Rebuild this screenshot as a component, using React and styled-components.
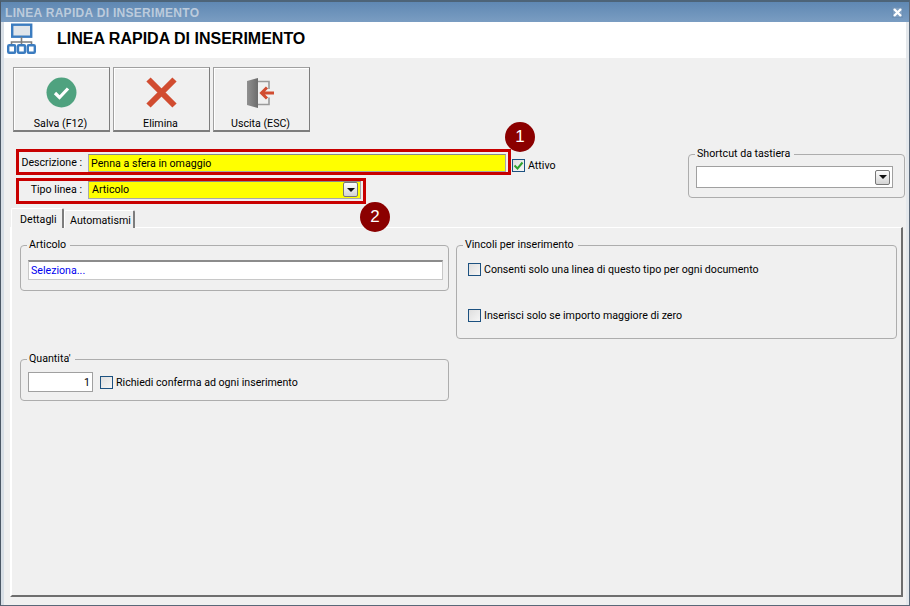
import React from 'react';
import styled, { createGlobalStyle } from 'styled-components';

const GlobalStyle = createGlobalStyle`
	html, body {
		margin: 0;
		padding: 0;
		background: #f0f0f0;
	}
	* {
		box-sizing: border-box;
	}
`;

const Window = styled.div`
	width: 910px;
	height: 606px;
	display: flex;
	flex-direction: column;
	overflow: hidden;
	background: #f0f0f0;
	border-top: 2px solid #4d6478;
	border-left: 1px solid #4c5866;
	border-right: 1px solid #5a6878;
	border-bottom: 1px solid #5a6878;
	box-shadow: inset 3px 0 0 #d8dfe6, inset -3px 0 0 #e4e8ec;
	font-family: Roboto, sans-serif;
	font-size: 10.65px;
	color: #000;
`;

const TitleBar = styled.div`
	height: 20px;
	flex: none;
	display: flex;
	align-items: center;
	justify-content: space-between;
	padding: 1px 6px 0 4px;
	background: linear-gradient(#5f88b3, #7a9dc2);
	color: #bccbdc;
	font-family: 'Liberation Sans', sans-serif;
	font-size: 12px;
	font-weight: bold;
	letter-spacing: 0.3px;
`;

const CloseButton = styled.div`
	width: 11px;
	height: 11px;
	display: flex;
	align-items: center;
	justify-content: center;
	background: #7f9fc1;
	border: 1px solid #6d90b5;
`;

const Header = styled.div`
	height: 36px;
	flex: none;
	display: flex;
	align-items: center;
	margin: 0 3px;
	padding-left: 3px;
	background: #fff;
`;

const HeaderTitle = styled.h1`
	margin: -2px 0 0 19px;
	font-family: 'Liberation Sans', sans-serif;
	font-size: 16px;
	font-weight: bold;
	color: #000;
`;

const Content = styled.div`
	position: relative;
	flex: 1;
	display: flex;
	flex-direction: column;
	padding: 9px 6px 8px 9px;
`;

const Toolbar = styled.div`
	display: flex;
	gap: 3px;
	margin-left: 3px;
`;

const ToolButton = styled.div`
	width: 97px;
	height: 65px;
	display: flex;
	flex-direction: column;
	align-items: center;
	padding-top: 8px;
	background: #f0f0f0;
	border: 1px solid #a0a0a0;
	border-right-color: #7d7d7d;
	border-bottom: 2px solid #7d7d7d;
	box-shadow: inset 1px 1px 0 #fff;
`;

const ToolIcon = styled.div`
	height: 32px;
	margin-right: 1px;
	display: flex;
	align-items: center;
	justify-content: center;
`;

const ToolLabel = styled.span`
	margin: 9px 2px 0 0;
`;

const FormArea = styled.div`
	display: flex;
	justify-content: space-between;
	margin: 17px 0 0 6px;
`;

const FormRows = styled.div`
	display: flex;
	flex-direction: column;
	gap: 3px;
`;

const RowLine = styled.div`
	display: flex;
	align-items: center;
	gap: 1px;
`;

const RedBox = styled.div`
	width: ${(p) => p.$width}px;
	height: 26px;
	display: flex;
	align-items: center;
	padding: 0 2px 0 0;
	border: 3px solid #c80000;
`;

const RowLabel = styled.label`
	width: 63px;
	flex: none;
	margin: ${(p) => p.$top}px 6px 0 0;
	text-align: right;
	white-space: pre;
`;

const YellowField = styled.div`
	flex: 1;
	height: 18px;
	margin-top: ${(p) => p.$top}px;
	display: flex;
	align-items: center;
	justify-content: space-between;
	padding: ${(p) => (p.$top > 0 ? 1 : 0)}px 2px ${(p) => (p.$top > 0 ? 0 : 1)}px ${(p) => p.$pad}px;
	background: #ffff00;
	border: 1px solid #a8a8a8;
	border-top-color: #8a8a8a;
`;

const CheckBox = styled.span`
	width: 13px;
	height: 13px;
	flex: none;
	display: inline-flex;
	align-items: center;
	justify-content: center;
	border: 1px solid #1c5180;
	background: linear-gradient(135deg, #dedede, #f6f6f6);
`;

const CheckRow = styled.div`
	display: flex;
	align-items: center;
	gap: 3px;
	height: 15px;
	margin-top: ${(p) => p.$top || 0}px;
	margin-left: ${(p) => p.$left || 0}px;
`;

const DropArrow = styled.span`
	width: 15px;
	height: 15px;
	flex: none;
	display: flex;
	align-items: center;
	justify-content: center;
	background: linear-gradient(#fdfdfd, #d4d4d4);
	border: 1px solid #777;
	border-radius: 2px;

	&::after {
		content: '';
		border-left: 4px solid transparent;
		border-right: 4px solid transparent;
		border-top: 4px solid #111;
	}
`;

const Group = styled.fieldset`
	margin: ${(p) => p.$top || 0}px 0 0 0;
	padding: ${(p) => p.$pad};
	width: ${(p) => p.$width}px;
	height: ${(p) => p.$height}px;
	border: 1px solid #adadad;
	border-radius: 4px;
	min-width: 0;

	legend {
		padding: 0 4px 0 2px;
		margin-left: -1px;
		line-height: 14px;
	}
`;

const ComboField = styled.div`
	height: 22px;
	margin-top: 5px;
	display: flex;
	align-items: center;
	justify-content: flex-end;
	padding-right: 2px;
	background: #fff;
	border: 1px solid #a0a0a0;
`;

const ShortcutGroup = styled(Group)`
	margin-top: -2px;
	margin-right: -2px;
`;

const Tabs = styled.div`
	display: flex;
	margin: 4px 0 -1px 1px;
	position: relative;
	z-index: 1;
`;

const Tab = styled.div`
	width: ${(p) => p.$width}px;
	height: ${(p) => (p.$active ? 20 : 18)}px;
	margin-top: ${(p) => (p.$active ? 0 : 2)}px;
	padding: 1px 0 0 ${(p) => (p.$active ? 8 : 5)}px;
	display: flex;
	align-items: center;
	background: #f0f0f0;
	border-top: 1px solid #fff;
	border-left: 1px solid #fff;
	border-right: 2px solid #7d7d7d;
	border-radius: 2px 2px 0 0;
`;

const TabPanel = styled.div`
	flex: 1;
	display: grid;
	grid-template-columns: 429px 441px;
	column-gap: 7px;
	align-content: start;
	padding: 10px 0 0 8px;
	border-top: 1px solid #fff;
	border-left: 2px solid #fff;
	border-right: 2px solid #6e6e6e;
	border-bottom: 2px solid #6e6e6e;
`;

const LeftColumn = styled.div`
	display: flex;
	flex-direction: column;
`;

const LinkField = styled.div`
	height: 20px;
	display: flex;
	align-items: center;
	padding-left: 2px;
	margin-top: 8px;
	background: #fff;
	color: #0000f0;
	border: 1px solid #c8c8c8;
	border-top: 2px solid #8c8c8c;
`;

const QuantityRow = styled.div`
	display: flex;
	align-items: center;
	gap: 7px;
	margin-top: 6px;
`;

const QuantityField = styled.div`
	width: 65px;
	height: 20px;
	display: flex;
	align-items: center;
	justify-content: flex-end;
	padding-right: 2px;
	background: #fff;
	border: 1px solid #a0a0a0;
`;

const Badge = styled.div`
	position: absolute;
	left: ${(p) => p.$x}px;
	top: ${(p) => p.$y}px;
	width: 30px;
	height: 30px;
	display: flex;
	align-items: center;
	justify-content: center;
	border-radius: 50%;
	background: #8b0000;
	color: #fff;
	font-family: 'Liberation Sans', sans-serif;
	font-size: 17px;
`;

const NetworkSvg = styled.svg`
	margin-top: -3px;
`;

const NetworkIcon = () => (
	<NetworkSvg width="31" height="31" viewBox="0 0 31 31" fill="none">
		<rect x="5.2" y="1.7" width="19" height="12" fill="#e0e5ea" stroke="#3b7cc0" strokeWidth="2.4" />
		<path d="M14.5 14v8M4.5 23v-4h20v4" stroke="#7d7d7d" strokeWidth="1.6" />
		<g stroke="#3b7cc0" strokeWidth="2.4" fill="#fff">
			<rect x="1.2" y="22.2" width="7" height="7.6" rx="1" />
			<rect x="11" y="22.2" width="7" height="7.6" rx="1" />
			<rect x="20.8" y="22.2" width="7" height="7.6" rx="1" />
		</g>
	</NetworkSvg>
);

const SaveIcon = () => (
	<svg width="31" height="31" viewBox="0 0 31 31">
		<circle cx="15.5" cy="15.5" r="15" fill="#4fa27f" />
		<path d="M9 16l4.5 4.5 8.5-9" fill="none" stroke="#fff" strokeWidth="3.2" />
	</svg>
);

const DeleteIcon = () => (
	<svg width="31" height="31" viewBox="0 0 31 31">
		<path d="M2.5 2.5l26 26M28.5 2.5l-26 26" stroke="#d14c30" strokeWidth="6" />
	</svg>
);

const ExitIcon = () => (
	<svg width="31" height="31" viewBox="0 0 31 31">
		<defs>
			<linearGradient id="door" x1="0" x2="1" y1="0" y2="0">
				<stop offset="0" stopColor="#909090" />
				<stop offset="1" stopColor="#6c6c6c" />
			</linearGradient>
		</defs>
		<path d="M1 4l11-3v30l-11-3z" fill="url(#door)" />
		<path d="M12 4.5h11v7.5M23 20.5v7H12" fill="none" stroke="#9a9a9a" strokeWidth="1.6" />
		<path d="M28 16H16M21 10.5L15.5 16l5.5 5.5" fill="none" stroke="#d14c30" strokeWidth="3" />
	</svg>
);

const GreenCheck = () => (
	<svg width="11" height="11" viewBox="0 0 11 11">
		<path d="M1.5 5.5l3 3 5-6" fill="none" stroke="#2fa02f" strokeWidth="2" />
	</svg>
);

const CloseGlyph = () => (
	<svg width="9" height="9" viewBox="0 0 9 9">
		<path d="M1 1l7 7M8 1L1 8" stroke="#fff" strokeWidth="2.4" />
	</svg>
);

const tools = [
	{ label: 'Salva (F12)', icon: <SaveIcon /> },
	{ label: 'Elimina', icon: <DeleteIcon /> },
	{ label: 'Uscita (ESC)', icon: <ExitIcon /> },
];

const App = () => (
	<>
		<GlobalStyle />
		<Window>
			<TitleBar>
				<span>LINEA RAPIDA DI INSERIMENTO</span>
				<CloseButton><CloseGlyph /></CloseButton>
			</TitleBar>
			<Header>
				<NetworkIcon />
				<HeaderTitle>LINEA RAPIDA DI INSERIMENTO</HeaderTitle>
			</Header>
			<Content>
				<Toolbar>
					{tools.map((t) => (
						<ToolButton key={t.label}>
							<ToolIcon>{t.icon}</ToolIcon>
							<ToolLabel>{t.label}</ToolLabel>
						</ToolButton>
					))}
				</Toolbar>
				<FormArea>
					<FormRows>
						<RowLine>
							<RedBox $width={495}>
								<RowLabel $top={1}>{'Descrizione :'}</RowLabel>
								<YellowField $pad={2} $top={2}>Penna a sfera in omaggio</YellowField>
							</RedBox>
							<CheckRow $top={6}>
								<CheckBox><GreenCheck /></CheckBox>
								<span>Attivo</span>
							</CheckRow>
						</RowLine>
						<RowLine>
							<RedBox $width={350}>
								<RowLabel $top={-3}>{'Tipo linea :'}</RowLabel>
								<YellowField $pad={3} $top={-2}>
									Articolo
									<DropArrow />
								</YellowField>
							</RedBox>
						</RowLine>
					</FormRows>
					<ShortcutGroup $width={217} $height={51} $pad="0 11px 0 7px">
						<legend>Shortcut da tastiera</legend>
						<ComboField><DropArrow /></ComboField>
					</ShortcutGroup>
				</FormArea>
				<Tabs>
					<Tab $active $width={53}>Dettagli</Tab>
					<Tab $width={71}>Automatismi</Tab>
				</Tabs>
				<TabPanel>
					<LeftColumn>
						<Group $width={429} $height={53} $pad="0 5px 0 7px">
							<legend>Articolo</legend>
							<LinkField>Seleziona...</LinkField>
						</Group>
						<Group $width={429} $height={49} $top={61} $pad="0 5px 0 7px">
							<legend>Quantita'</legend>
							<QuantityRow>
								<QuantityField>1</QuantityField>
								<CheckRow>
									<CheckBox />
									<span>Richiedi conferma ad ogni inserimento</span>
								</CheckRow>
							</QuantityRow>
						</Group>
					</LeftColumn>
					<Group $width={441} $height={101} $pad="0 8px 0 7px">
						<legend>Vincoli per inserimento</legend>
						<CheckRow $top={10} $left={4}>
							<CheckBox />
							<span>Consenti solo una linea di questo tipo per ogni documento</span>
						</CheckRow>
						<CheckRow $top={31} $left={4}>
							<CheckBox />
							<span>Inserisci solo se importo maggiore di zero</span>
						</CheckRow>
					</Group>
				</TabPanel>
				<Badge $x={504} $y={64}>1</Badge>
				<Badge $x={359} $y={144}>2</Badge>
			</Content>
		</Window>
	</>
);

export default App;
